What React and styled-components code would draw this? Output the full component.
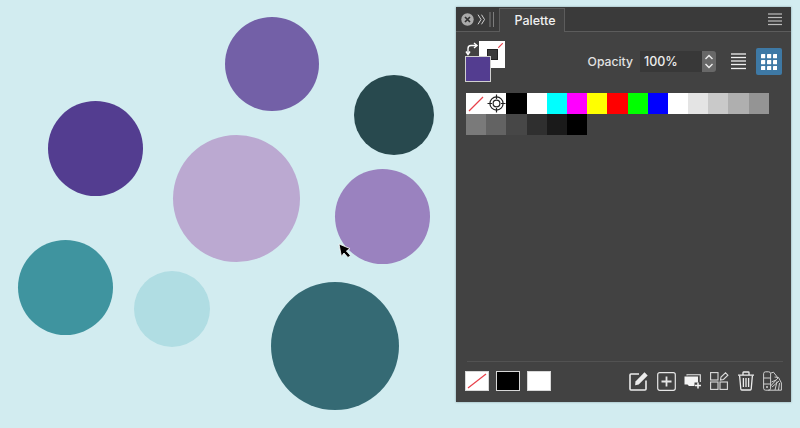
import React from "react";
import styled, { createGlobalStyle } from "styled-components";

const GlobalStyle = createGlobalStyle`
  html, body {
    margin: 0;
    padding: 0;
    background: #d2ecf0;
  }
  body {
    font-family: "Inter", "Liberation Sans", sans-serif;
  }
`;

const Canvas = styled.div`
  position: relative;
  width: 800px;
  height: 428px;
  overflow: hidden;
  background: #d2ecf0;
`;

const Circle = styled.div`
  position: absolute;
  left: ${(p) => p.$x - p.$r}px;
  top: ${(p) => p.$y - p.$r}px;
  width: ${(p) => p.$r * 2}px;
  height: ${(p) => p.$r * 2}px;
  border-radius: 50%;
  background: ${(p) => p.$color};
`;

const Cursor = styled.svg`
  position: absolute;
  left: 338px;
  top: 243px;
`;

const Panel = styled.div`
  position: absolute;
  left: 456px;
  top: 7px;
  width: 335px;
  height: 395px;
  display: flex;
  flex-direction: column;
  background: #424242;
  box-shadow: 0 0 2px rgba(40, 70, 75, 0.45);
`;

const TitleBar = styled.div`
  display: flex;
  align-items: flex-end;
  height: 25px;
  padding: 0 9px 0 4px;
  background: #3a3a3a;
  border-bottom: 1px solid #5c5c5c;
  box-sizing: border-box;
`;

const TitleControls = styled.div`
  display: flex;
  align-items: center;
  width: 39px;
  height: 24px;
  gap: 3px;
  padding-left: 1px;
  box-sizing: border-box;
`;

const Tab = styled.div`
  width: 66px;
  height: 24px;
  margin-bottom: -1px;
  padding-left: 6px;
  box-sizing: border-box;
  display: flex;
  align-items: center;
  justify-content: center;
  background: #424242;
  border: 1px solid #5c5c5c;
  border-bottom: none;
  color: #f0f0f0;
  font-size: 12.5px;
  font-weight: 500;
`;

const TitleMenu = styled.svg`
  margin-left: auto;
  align-self: center;
`;

const TopRow = styled.div`
  display: flex;
  align-items: center;
  height: 61px;
  padding: 0 9px 2px;
  box-sizing: border-box;
`;

const ColorStack = styled.div`
  position: relative;
  width: 40px;
  height: 41px;
`;

const BackColor = styled.div`
  position: absolute;
  left: 14px;
  top: 0;
  width: 26px;
  height: 27px;
  background: #fff;
  display: flex;
  align-items: center;
  justify-content: center;
`;

const BackHole = styled.div`
  width: 11px;
  height: 11px;
  background: #3b3b3b;
  border: 1px solid #222;
  box-sizing: border-box;
`;

const FrontColor = styled.div`
  position: absolute;
  left: 0;
  top: 15px;
  width: 26px;
  height: 26px;
  box-sizing: border-box;
  background: #533d90;
  border: 1px solid #d0d0d0;
`;

const SwapIcon = styled.svg`
  position: absolute;
  left: 0;
  top: 1px;
`;

const NoneTick = styled.svg`
  position: absolute;
  right: 2px;
  top: 2px;
`;

const OpacityLabel = styled.span`
  margin-left: auto;
  color: #e2e2e2;
  font-size: 12.2px;
  font-weight: 500;
`;

const OpacityField = styled.div`
  display: flex;
  align-items: stretch;
  height: 21px;
  margin-left: 7px;
`;

const OpacityValue = styled.div`
  width: 62px;
  padding-left: 4px;
  box-sizing: border-box;
  display: flex;
  align-items: center;
  background: #383838;
  color: #ececec;
  font-size: 12.5px;
  font-weight: 500;
`;

const Stepper = styled.div`
  width: 14px;
  display: flex;
  align-items: center;
  justify-content: center;
  background: #686868;
  border-radius: 0 3px 3px 0;
`;

const ViewToggle = styled.div`
  display: flex;
  align-items: center;
  margin-left: 15px;
  gap: 10px;
`;

const ViewButton = styled.div`
  width: 26px;
  height: 27px;
  display: flex;
  align-items: center;
  justify-content: center;
  border-radius: 2px;
  background: ${(p) => (p.$active ? "#3e79a5" : "transparent")};
`;

const SwatchGrid = styled.div`
  display: grid;
  grid-template-columns: repeat(15, 20.2px);
  grid-auto-rows: 21px;
  margin: 0 0 0 10px;
`;

const Swatch = styled.div`
  display: flex;
  align-items: center;
  justify-content: center;
  background: ${(p) => p.$color};
`;

const Footer = styled.div`
  margin: auto 8px 0 11px;
  height: 41px;
  padding: 0 1px 2px 0;
  box-sizing: border-box;
  border-top: 1px solid #525252;
  display: flex;
  align-items: center;
`;

const FooterSwatches = styled.div`
  display: flex;
  align-items: center;
  gap: 7px;
  margin-left: -2px;
`;

const FooterSwatch = styled.div`
  width: 24px;
  height: 20px;
  box-sizing: border-box;
  background: ${(p) => p.$color};
  border: 1px solid #d8d8d8;
`;

const FooterIcons = styled.div`
  display: flex;
  align-items: center;
  gap: 8px;
  margin-left: auto;
`;

const circles = [
  { x: 272, y: 64, r: 47, color: "#7360a7" },
  { x: 394, y: 115, r: 40, color: "#28494e" },
  { x: 95.5, y: 148.5, r: 47.5, color: "#533d90" },
  { x: 236.5, y: 198.5, r: 63.5, color: "#bba9d1" },
  { x: 382.5, y: 216.5, r: 47.5, color: "#9a82bf" },
  { x: 65.5, y: 287.5, r: 47.5, color: "#3f949f" },
  { x: 172, y: 309, r: 38, color: "#b0dde3" },
  { x: 334.5, y: 346, r: 64, color: "#356a74" },
];

const paletteColors = [
  "#ffffff", "#ffffff", "#000000", "#ffffff", "#00ffff", "#ff00ff", "#ffff00", "#ff0000",
  "#00ff00", "#0000ff", "#ffffff", "#e4e4e4", "#c9c9c9", "#afafaf", "#949494",
  "#7a7a7a", "#636363", "#474747", "#2f2f2f", "#1a1a1a", "#000000",
];

const NoneSlash = ({ w, h }) => (
  <svg width={w} height={h} viewBox={`0 0 ${w} ${h}`}>
    <line x1="2" y1={h - 2} x2={w - 2} y2="2" stroke="#e8404a" strokeWidth="1.2" />
  </svg>
);

const TargetIcon = () => (
  <svg width="19" height="19" viewBox="0 0 19 19" fill="none" stroke="#222" strokeWidth="1.2">
    <circle cx="9.5" cy="9.5" r="6.6" />
    <circle cx="9.5" cy="9.5" r="3.4" />
    <path d="M9.5 0.5V5M9.5 14V18.5M0.5 9.5H5M14 9.5H18.5" />
  </svg>
);

const GridIcon = () => (
  <svg width="16" height="16" viewBox="0 0 16 16" fill="#fff">
    {[0, 6, 12].map((y) =>
      [0, 6, 12].map((x) => <rect key={`${x}-${y}`} x={x} y={y} width="4.2" height="4.2" rx="0.4" />)
    )}
  </svg>
);

const ListIcon = () => (
  <svg width="15" height="18" viewBox="0 0 15 18" stroke="#f0f0f0" strokeWidth="1.3">
    {[1, 4.5, 8, 11.5, 15.5].map((y) => (
      <line key={y} x1="0" x2="15" y1={y} y2={y} />
    ))}
  </svg>
);

const EditIcon = () => (
  <svg width="20" height="20" viewBox="0 0 20 20" fill="none">
    <path d="M10 3H2a1 1 0 0 0-1 1v14a1 1 0 0 0 1 1h14a1 1 0 0 0 1-1V9.5" stroke="#ececec" strokeWidth="1.6" />
    <path d="M6.5 10.5 15.5 1.2l3.2 3.2-9 9.1-3.6.7z" fill="#ececec" />
  </svg>
);

const AddIcon = () => (
  <svg width="19" height="19" viewBox="0 0 19 19" fill="none" stroke="#e6e6e6">
    <rect x="0.7" y="0.7" width="17.6" height="17.6" rx="2" strokeWidth="1.2" />
    <path d="M9.5 4.5V14.5M4.5 9.5H14.5" strokeWidth="1.8" />
  </svg>
);

const AddFillIcon = () => (
  <svg width="18" height="15" viewBox="0 0 18 15" fill="none">
    <path d="M3 1.5V0.7H16.3V8" stroke="#e6e6e6" strokeWidth="1.1" />
    <path d="M0.5 2.5H14V8.5H10.5V12H5L3.5 10.5H0.5z" fill="#f4f4f4" />
    <path d="M14 8.5V14.5M11 11.5H17" stroke="#f4f4f4" strokeWidth="1.5" />
  </svg>
);

const TilesIcon = () => (
  <svg width="19" height="18" viewBox="0 0 19 18" fill="none" stroke="#dcdcdc" strokeWidth="1.1">
    <rect x="0.6" y="0.6" width="7.4" height="7.4" />
    <rect x="0.6" y="10" width="7.4" height="7.4" />
    <rect x="10" y="10" width="7.4" height="7.4" />
    <path d="M10.5 8 11 5 15.5 0.8l2.4 2.4-4.4 4.3z" />
  </svg>
);

const TrashIcon = () => (
  <svg width="18" height="20" viewBox="0 0 18 20" fill="none" stroke="#ececec" strokeWidth="1.3">
    <path d="M1 4.2H17M6 4V1.6Q6 1 6.6 1H11.4Q12 1 12 1.6V4" />
    <path d="M2.6 4.5 3.8 18Q3.9 19 4.8 19H13.2Q14.1 19 14.2 18L15.4 4.5" />
    <path d="M6.4 7V16M9 7V16M11.6 7V16" />
  </svg>
);

const SwatchBookIcon = () => (
  <svg width="19" height="20" viewBox="0 0 19 20" fill="none" stroke="#cfcfcf" strokeWidth="1">
    <rect x="0.6" y="0.8" width="7" height="18.4" rx="2" />
    <path d="M0.6 7H7.6M0.6 13H7.6" />
    <path d="M7.6 2.2 10.5 1.2 15 7 7.6 15" />
    <path d="M11.5 6 15.5 6.5 18.4 12V19.2H5" />
    <path d="M12 19 14 10.5M15.5 19 16.5 12M9 16 16 10M8.5 11 13 9" />
    <circle cx="4" cy="16" r="1" fill="#cfcfcf" stroke="none" />
  </svg>
);

const CloseIcon = () => (
  <svg width="13" height="13" viewBox="0 0 13 13">
    <circle cx="6.5" cy="6.5" r="6.2" fill="#aaaaaa" />
    <path d="M4 4 9 9M9 4 4 9" stroke="#333" strokeWidth="1.7" />
  </svg>
);

const CollapseIcon = () => (
  <svg width="9" height="11" viewBox="0 0 9 11" fill="none" stroke="#d2d2d2" strokeWidth="1">
    <path d="M1 0.7 4 5.5 1 10.3M4.5 0.7 7.5 5.5 4.5 10.3" />
  </svg>
);

const GripIcon = () => (
  <svg width="6" height="15" viewBox="0 0 6 15" stroke="#7d7d7d" strokeWidth="1">
    <line x1="1" x2="1" y1="0" y2="15" />
    <line x1="4.5" x2="4.5" y1="0" y2="15" />
  </svg>
);

const App = () => {
  return (
    <>
      <GlobalStyle />
      <Canvas>
        {circles.map((c) => (
          <Circle key={`${c.x}-${c.y}`} $x={c.x} $y={c.y} $r={c.r} $color={c.color} />
        ))}
        <Cursor width="14" height="16" viewBox="0 0 14 16">
          <path d="M1 1 3.4 13.4 6 10 10 14.6 12.4 12.4 8.4 8 12 5.6z" fill="#000" stroke="#fff" strokeWidth="0.8" />
        </Cursor>
        <Panel>
          <TitleBar>
            <TitleControls>
              <CloseIcon />
              <CollapseIcon />
              <GripIcon />
            </TitleControls>
            <Tab>Palette</Tab>
            <TitleMenu width="14" height="13" viewBox="0 0 14 13" stroke="#bdbdbd" strokeWidth="1.2">
              <line x1="0" x2="14" y1="1" y2="1" />
              <line x1="0" x2="14" y1="4.5" y2="4.5" />
              <line x1="0" x2="14" y1="8" y2="8" />
              <line x1="0" x2="14" y1="11.5" y2="11.5" />
            </TitleMenu>
          </TitleBar>
          <TopRow>
            <ColorStack>
              <SwapIcon width="14" height="14" viewBox="0 0 14 14" fill="none" stroke="#fff" strokeWidth="1.4">
                <path d="M3 12V6.5Q3 3.5 6 3.5H11" />
                <path d="M9 1 12 3.5 9 6M1 9.5 3 12.5 5 9.5" />
              </SwapIcon>
              <BackColor>
                <BackHole />
                <NoneTick width="5" height="5" viewBox="0 0 5 5">
                  <line x1="0.3" y1="4.7" x2="4.7" y2="0.3" stroke="#e8404a" strokeWidth="1.2" />
                </NoneTick>
              </BackColor>
              <FrontColor />
            </ColorStack>
            <OpacityLabel>Opacity</OpacityLabel>
            <OpacityField>
              <OpacityValue>100%</OpacityValue>
              <Stepper>
                <svg width="10" height="15" viewBox="0 0 10 15" fill="none" stroke="#eee" strokeWidth="1.4">
                  <path d="M1.5 5 5 1.5 8.5 5M1.5 10 5 13.5 8.5 10" />
                </svg>
              </Stepper>
            </OpacityField>
            <ViewToggle>
              <ListIcon />
              <ViewButton $active>
                <GridIcon />
              </ViewButton>
            </ViewToggle>
          </TopRow>
          <SwatchGrid>
            {paletteColors.map((color, i) => (
              <Swatch key={i} $color={color}>
                {i === 0 && <NoneSlash w={18} h={18} />}
                {i === 1 && <TargetIcon />}
              </Swatch>
            ))}
          </SwatchGrid>
          <Footer>
            <FooterSwatches>
              <FooterSwatch $color="#fff">
                <NoneSlash w={22} h={18} />
              </FooterSwatch>
              <FooterSwatch $color="#000" />
              <FooterSwatch $color="#fff" />
            </FooterSwatches>
            <FooterIcons>
              <EditIcon />
              <AddIcon />
              <AddFillIcon />
              <TilesIcon />
              <TrashIcon />
              <SwatchBookIcon />
            </FooterIcons>
          </Footer>
        </Panel>
      </Canvas>
    </>
  );
};

export default App;
